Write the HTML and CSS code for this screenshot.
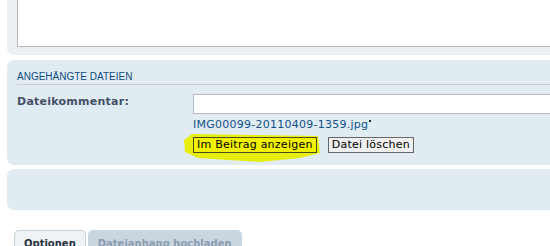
FILE: index.html
```html
<!DOCTYPE html>
<html lang="de">

<head>
    <meta charset="UTF-8">
    <title>Dateianhänge</title>
    <link rel="stylesheet" href="styles.css">
</head>

<body>
    <div class="page">
        <!-- Nachrichtentext -->
        <div class="panel panel-text">
            <textarea class="message"></textarea>
        </div>

        <!-- Angehängte Dateien -->
        <div class="panel panel-files">
            <h3>Angehängte Dateien</h3>
            <div class="row">
                <label class="label">Dateikommentar:</label>
                <div class="field">
                    <input type="text" class="inputbox">
                    <div class="filename"><a href="#">IMG00099-20110409-1359.jpg</a><span class="cursor"></span></div>
                    <div class="actions">
                        <svg class="marker" width="142" height="34" viewBox="0 0 142 34">
                            <path d="M2 9 L10 3 L136 5 L138 22 L118 27 L78 31 L46 29 L16 27 L3 21 Z" fill="#e6ee10" />
                        </svg>
                        <button class="btn btn-marked">Im Beitrag anzeigen</button>
                        <button class="btn">Datei löschen</button>
                    </div>
                </div>
            </div>
        </div>

        <div class="panel panel-empty"></div>

        <!-- Reiter -->
        <ul class="tabs">
            <li class="tab active">Optionen</li>
            <li class="tab">Dateianhang hochladen</li>
        </ul>
    </div>
</body>

</html>
```

FILE: styles.css
```css
body {
    margin: 0;
    overflow: hidden;
    font-family: "DejaVu Sans", Verdana, sans-serif;
    font-size: 11px;
    letter-spacing: 0.25px;
    background-color: #fff;
}

.page {
    padding-left: 7px;
    margin-right: -30px;
}

.panel {
    background-color: #e1ebf2;
    border-radius: 7px;
}

.panel-text {
    background-color: #ebeff2;
    border-radius: 0 0 7px 7px;
    margin-top: -10px;
    padding: 0 0 8px 10px;
}

.message {
    display: block;
    box-sizing: border-box;
    width: 100%;
    height: 57px;
    margin: 0;
    border: 1px solid #b4bac0;
    background-color: #fff;
    resize: none;
}

.panel-files {
    margin-top: 5px;
    padding: 0 0 12px 10px;
}

.panel-empty {
    margin-top: 4px;
    height: 41px;
}

h3 {
    margin: 0;
    padding-top: 11px;
    padding-bottom: 1px;
    font-family: "Liberation Sans", Arial, sans-serif;
    font-size: 10px;
    font-weight: normal;
    letter-spacing: 0;
    line-height: 12px;
    text-transform: uppercase;
    color: #0d4c85;
    border-bottom: 1px solid #c8ccd0;
}

.row {
    display: flex;
    align-items: flex-start;
    margin-top: 9px;
}

.label {
    width: 176px;
    padding-top: 1px;
    font-weight: bold;
    line-height: 13px;
    color: #425067;
}

.field {
    flex: 1;
}

.inputbox {
    display: block;
    box-sizing: border-box;
    width: 100%;
    height: 20px;
    margin: 0;
    border: 1px solid #b4bac0;
    background-color: #fff;
}

.filename {
    margin-top: 4px;
    line-height: 13px;
}

.filename a {
    color: #105289;
    text-decoration: none;
}

.cursor {
    display: inline-block;
    width: 2px;
    height: 2px;
    margin-left: 1px;
    vertical-align: 6px;
    background-color: #222;
}

.actions {
    position: relative;
    display: flex;
    gap: 11px;
    margin-top: 6px;
}

.marker {
    position: absolute;
    left: -11px;
    top: -6px;
    filter: blur(0.6px);
}

.btn {
    position: relative;
    height: 16px;
    margin: 0;
    padding: 0 3px;
    font-family: "DejaVu Sans", Verdana, sans-serif;
    font-size: 11px;
    letter-spacing: 0.25px;
    line-height: 14px;
    color: #000;
    background-color: #efefef;
    border: 1px solid #666;
}

.btn-marked {
    background-color: #f2f200;
    border-color: #4a4a20;
}

.tabs {
    display: flex;
    gap: 2px;
    margin: 20px 0 0 7px;
    padding: 0;
    list-style: none;
}

.tab {
    padding: 8px 10px 4px;
    font-size: 10px;
    font-weight: bold;
    letter-spacing: 0;
    line-height: 12px;
    color: #8c9cb0;
    background-color: #c9d6e0;
    border-radius: 5px 5px 0 0;
}

.tab.active {
    padding: 7px 9px 4px;
    color: #28313f;
    background-color: #eef3f6;
    border: 1px solid #c7d0d8;
    border-bottom: none;
}
```
